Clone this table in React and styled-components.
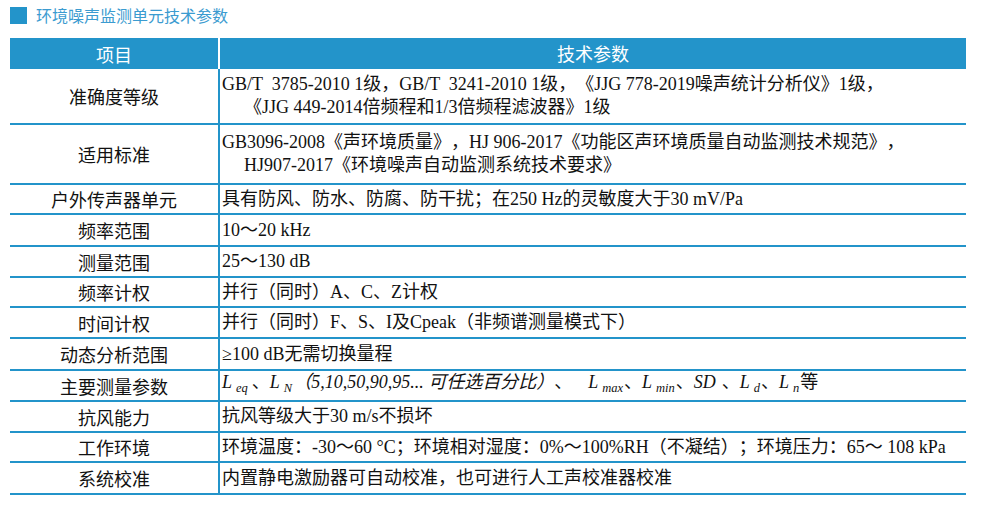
import React from "react";
import styled, { createGlobalStyle } from "styled-components";

const blue = "#2394ca";

const GlobalStyle = createGlobalStyle`
  body {
    margin: 0;
    background: #fff;
    font-family: "Noto Sans CJK SC", sans-serif;
    text-spacing-trim: space-all;
  }
`;

const Page = styled.div`
  width: 956px;
  padding: 7px 10px 0 10px;
`;

const Title = styled.div`
  display: flex;
  align-items: center;
  gap: 9px;
  height: 17px;
  margin-bottom: 14px;
  color: #3b9bd0;
  font-size: 16px;
  line-height: 17px;
`;

const Square = styled.span`
  width: 17px;
  height: 17px;
  background: ${blue};
`;

const Row = styled.div`
  display: grid;
  grid-template-columns: 210px 1fr;
  height: ${(p) => p.h || 31}px;
  box-sizing: border-box;
  border-bottom: ${(p) => (p.head ? "none" : `2px solid ${blue}`)};
  background: ${(p) => (p.head ? blue : "transparent")};
  color: ${(p) => (p.head ? "#fff" : "#111")};
`;

const Name = styled.div`
  display: flex;
  align-items: center;
  justify-content: center;
  border-right: 2px solid ${(p) => (p.head ? "#fff" : blue)};
  font-size: 18px;
  font-family: "Noto Sans CJK SC", sans-serif;
  line-height: 20px;
`;

const Value = styled.div`
  display: flex;
  flex-direction: column;
  justify-content: center;
  align-items: ${(p) => (p.head ? "center" : "flex-start")};
  padding-left: ${(p) => (p.head ? 0 : 2)}px;
  font-size: 18px;
  font-family: ${(p) =>
    p.head
      ? `"Noto Sans CJK SC", sans-serif`
      : `"Liberation Serif", "Noto Sans CJK SC", serif`};
  line-height: 23px;
  white-space: pre;
`;

const Line = styled.div`
  padding-left: ${(p) => p.indent || 0}px;
`;

const Sym = styled.i`
  font-family: "Liberation Serif", serif;
  margin-right: ${(p) => p.gap || 1}px;
  sub {
    font-size: 12.5px;
    vertical-align: -4px;
    margin-left: 4px;
  }
`;

const Sep = styled.span`
  margin-right: ${(p) => p.gap || 0}px;
`;

const Ital = styled.i`
  font-family: "Liberation Serif", "Noto Sans CJK SC", serif;
`;

const rows = [
  {
    name: "准确度等级",
    h: 56,
    lines: [
      "GB/T  3785-2010 1级，GB/T  3241-2010 1级，《JJG 778-2019噪声统计分析仪》1级，",
      "《JJG 449-2014倍频程和1/3倍频程滤波器》1级",
    ],
  },
  {
    name: "适用标准",
    h: 60,
    lines: [
      "GB3096-2008《声环境质量》，HJ 906-2017《功能区声环境质量自动监测技术规范》，",
      "HJ907-2017《环境噪声自动监测系统技术要求》",
    ],
  },
  { name: "户外传声器单元", h: 30, lines: ["具有防风、防水、防腐、防干扰；在250 Hz的灵敏度大于30 mV/Pa"] },
  { name: "频率范围", h: 32, lines: ["10～20 kHz"] },
  { name: "测量范围", h: 31, lines: ["25～130 dB"] },
  { name: "频率计权", h: 30, lines: ["并行（同时）A、C、Z计权"] },
  { name: "时间计权", h: 31, lines: ["并行（同时）F、S、I及Cpeak（非频谱测量模式下）"] },
  { name: "动态分析范围", h: 32, lines: ["≥100 dB无需切换量程"] },
  { name: "主要测量参数", h: 31, params: true },
  { name: "抗风能力", h: 31, lines: ["抗风等级大于30 m/s不损坏"] },
  {
    name: "工作环境",
    h: 30,
    lines: ["环境温度：-30～60 °C；环境相对湿度：0%～100%RH（不凝结）；环境压力：65～ 108 kPa"],
  },
  { name: "系统校准", h: 32, lines: ["内置静电激励器可自动校准，也可进行人工声校准器校准"] },
];

function Params() {
  return (
    <Line>
      <Sym gap={4}>L<sub>eq</sub></Sym>
      <Sep>、</Sep>
      <Sym>L<sub>N</sub></Sym>
      <Ital>（5,10,50,90,95... 可任选百分比）</Ital>
      <Sep gap={16}>、</Sep>
      <Sym>L<sub>max</sub></Sym>
      <Sep>、</Sep>
      <Sym>L<sub>min</sub></Sym>
      <Sep>、</Sep>
      <Sym gap={6}>SD</Sym>
      <Sep>、</Sep>
      <Sym>L<sub>d</sub></Sym>
      <Sep>、</Sep>
      <Sym>L<sub>n</sub></Sym>等
    </Line>
  );
}

export default function App() {
  return (
    <Page>
      <GlobalStyle />
      <Title>
        <Square />
        环境噪声监测单元技术参数
      </Title>
      <Row head h={31}>
        <Name head>项目</Name>
        <Value head>技术参数</Value>
      </Row>
      {rows.map((r) => (
        <Row key={r.name} h={r.h}>
          <Name>{r.name}</Name>
          <Value>
            {r.params ? (
              <Params />
            ) : (
              r.lines.map((l, i) => (
                <Line key={i} indent={i > 0 ? 22 : 0}>
                  {l}
                </Line>
              ))
            )}
          </Value>
        </Row>
      ))}
    </Page>
  );
}
